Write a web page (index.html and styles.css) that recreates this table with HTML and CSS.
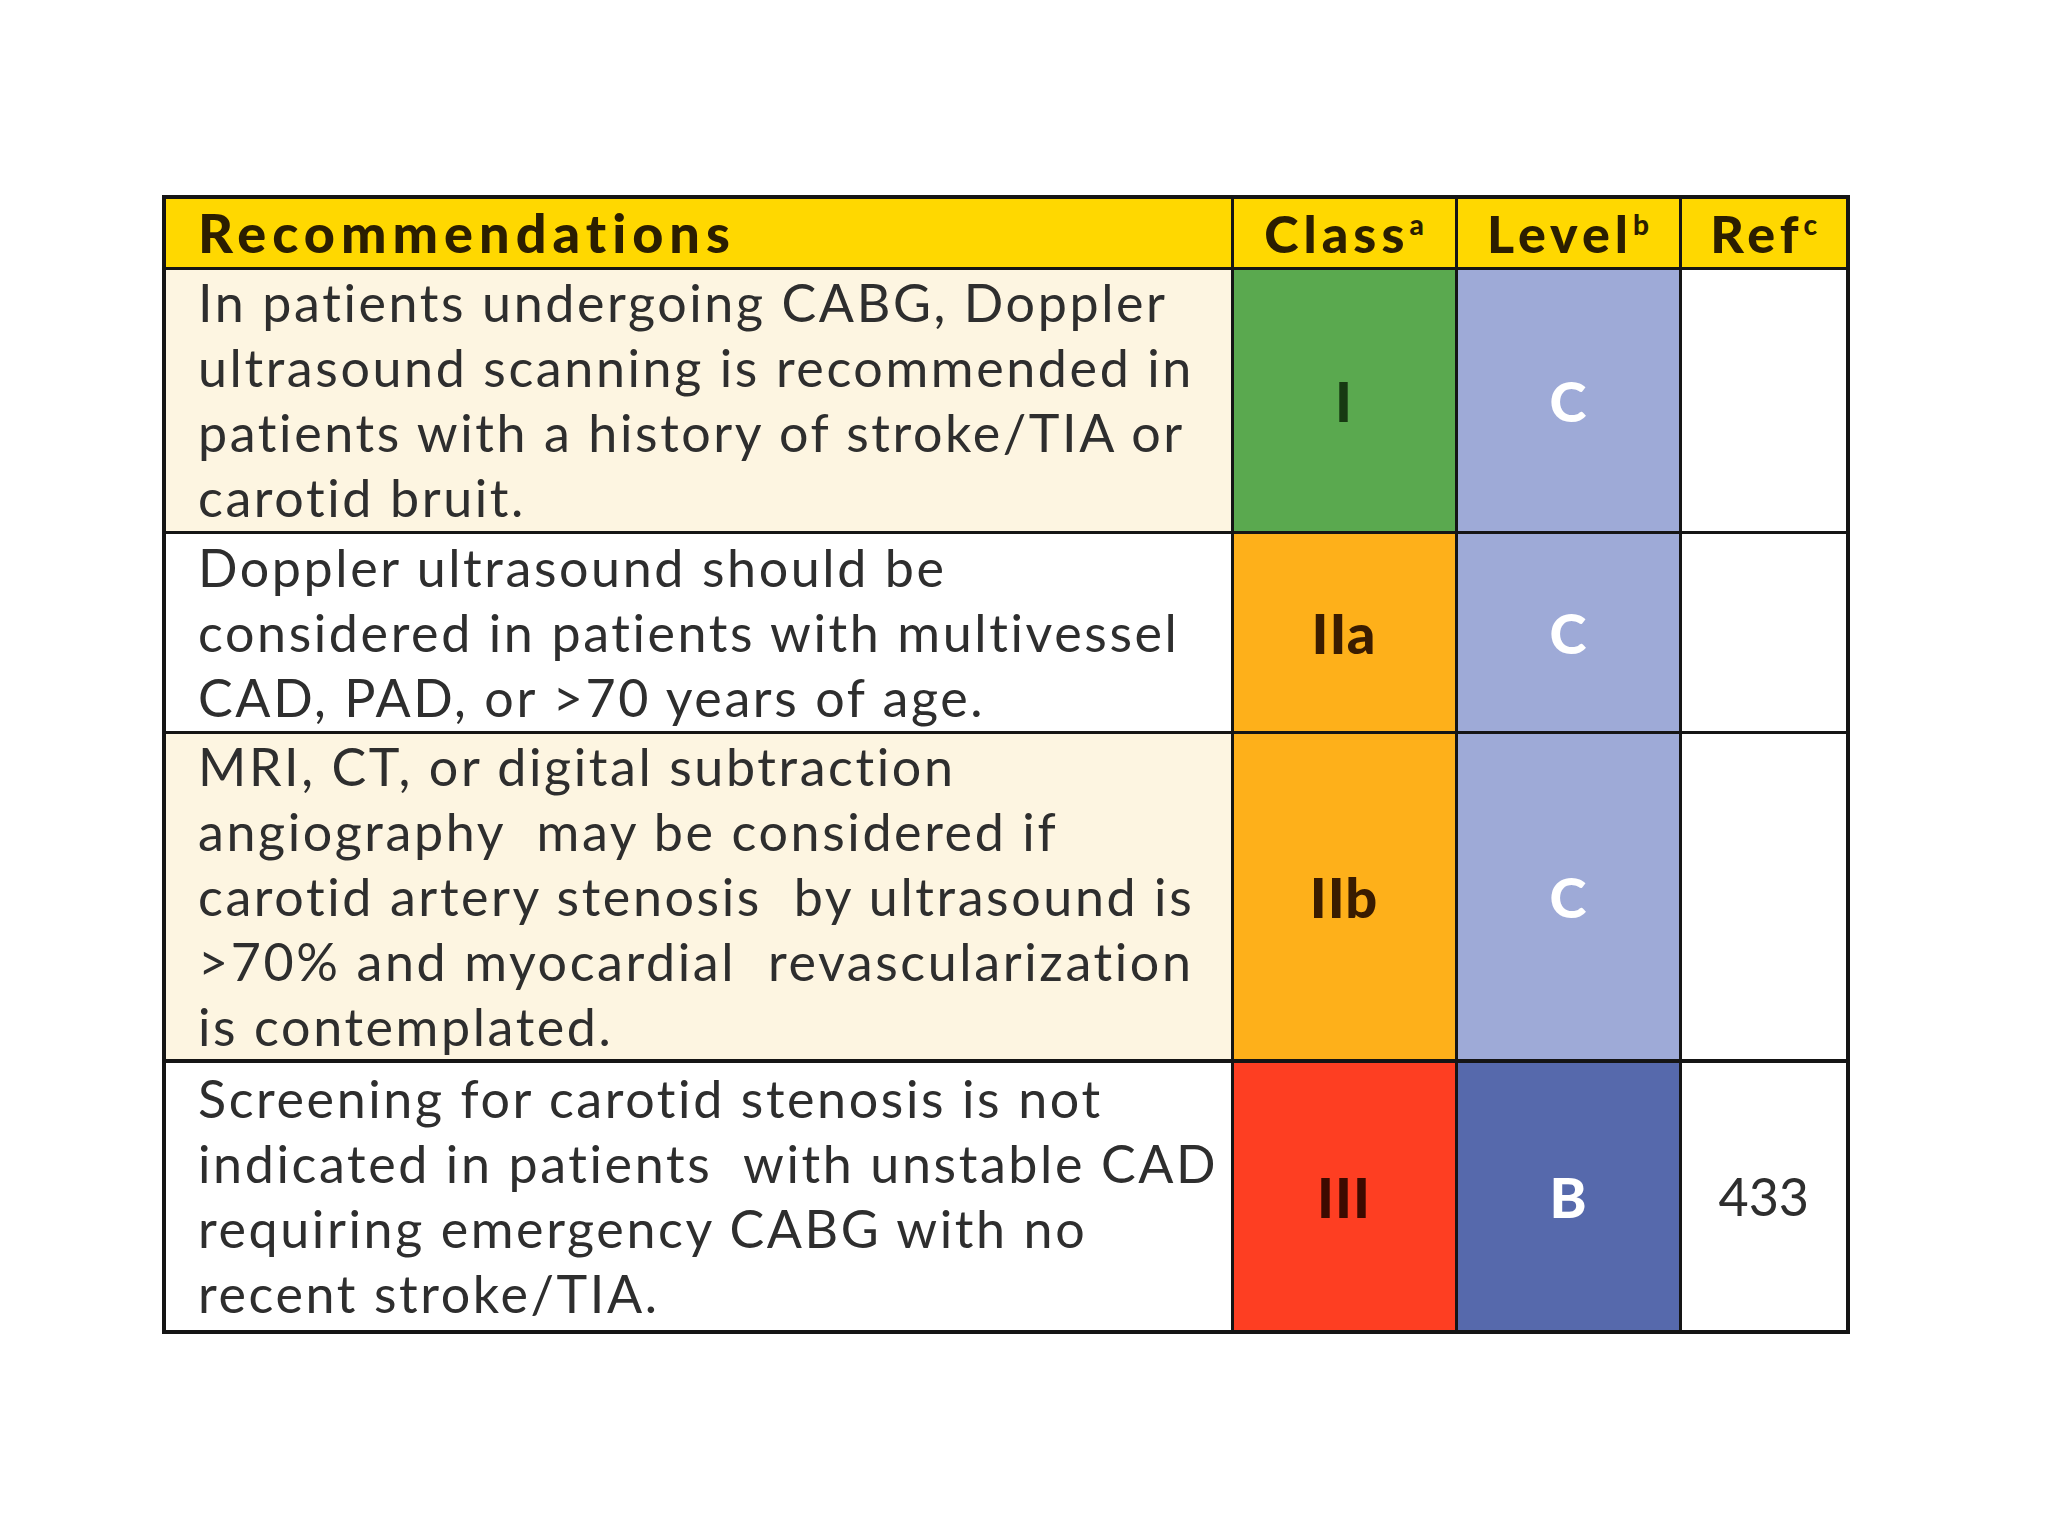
FILE: index.html
```html
<!DOCTYPE html>
<html lang="en">
<head>
<meta charset="utf-8">
<title>Recommendations</title>
<link rel="stylesheet" href="styles.css">
</head>
<body>
<div class="page">
  <table class="rec">
    <colgroup>
      <col class="c-text">
      <col class="c-class">
      <col class="c-level">
      <col class="c-ref">
    </colgroup>
    <thead>
      <tr class="head">
        <th class="h-text">Recommendations</th>
        <th>Class<sup>a</sup></th>
        <th>Level<sup>b</sup></th>
        <th>Ref<sup>c</sup></th>
      </tr>
    </thead>
    <tbody>
      <tr class="r1">
        <td class="text cream">In patients undergoing CABG, Doppler<br>ultrasound scanning is recommended in<br>patients with a history of stroke/TIA or<br>carotid bruit.</td>
        <td class="cls green">I</td>
        <td class="lvl light">C</td>
        <td class="ref"></td>
      </tr>
      <tr class="r2">
        <td class="text white">Doppler ultrasound should be<br>considered in patients with multivessel<br>CAD, PAD, or &gt;70 years of age.</td>
        <td class="cls orange">IIa</td>
        <td class="lvl light">C</td>
        <td class="ref"></td>
      </tr>
      <tr class="r3">
        <td class="text cream">MRI, CT, or digital subtraction<br>angiography&nbsp; may be considered if<br>carotid artery stenosis&nbsp; by ultrasound is<br>&gt;70% and myocardial&nbsp; revascularization<br>is contemplated.</td>
        <td class="cls orange">IIb</td>
        <td class="lvl light">C</td>
        <td class="ref"></td>
      </tr>
      <tr class="r4">
        <td class="text white">Screening for carotid stenosis is not<br>indicated in patients&nbsp; with unstable CAD<br>requiring emergency CABG with no<br>recent stroke/TIA.</td>
        <td class="cls red">III</td>
        <td class="lvl dark">B</td>
        <td class="ref">433</td>
      </tr>
    </tbody>
  </table>
</div>
</body>
</html>
```
FILE: styles.css
```css
html, body {
  margin: 0;
  padding: 0;
  background: #ffffff;
}

.page {
  padding: 195px 0 0 162px;
  font-family: Lato, "Liberation Sans", sans-serif;
}

.rec {
  border-collapse: collapse;
  table-layout: fixed;
  width: 1684px;
  border: 4px solid #151515;
}

.c-text { width: 1068px; }
.c-class { width: 224px; }
.c-level { width: 224px; }
.c-ref { width: 168px; }

.rec th,
.rec td {
  border: 3px solid #151515;
  padding: 0;
  vertical-align: middle;
}

.head {
  height: 71px;
}

.head th {
  background: #ffd800;
  color: #2b1e00;
  font-weight: 900;
  font-size: 52px;
  letter-spacing: 5px;
  line-height: 1;
  text-align: center;
  white-space: nowrap;
}

.head th.h-text {
  text-align: left;
  padding-left: 32px;
  font-size: 54px;
  letter-spacing: 6px;
}

.head sup {
  font-size: 28px;
  vertical-align: 18px;
  letter-spacing: 0;
}

.r1 { height: 264px; }
.r2 { height: 200px; }
.r3 { height: 327px; }
.r4 { height: 271px; }

.r4 td { border-top-width: 4px; }

.text {
  padding-left: 32px !important;
  font-size: 52px;
  line-height: 65px;
  color: #2e2e2e;
  white-space: nowrap;
  letter-spacing: 2.6px;
}

.cream { background: #fdf5e1; }
.white { background: #ffffff; }

.cls {
  text-align: center;
  font-weight: 900;
  font-size: 56px;
  letter-spacing: 1px;
}

.green { background: #5aa94f; color: #173a12; }
.orange { background: #feb01a; color: #3a1c00; }
.red { background: #fe3e22; color: #3d0a00; }

.lvl {
  text-align: center;
  font-weight: 900;
  font-size: 56px;
  color: #ffffff;
}

.light { background: #9eaad7; }
.dark { background: #5669ac; }

.ref {
  background: #ffffff;
  text-align: center;
  font-size: 52px;
  color: #2e2e2e;
}
```
